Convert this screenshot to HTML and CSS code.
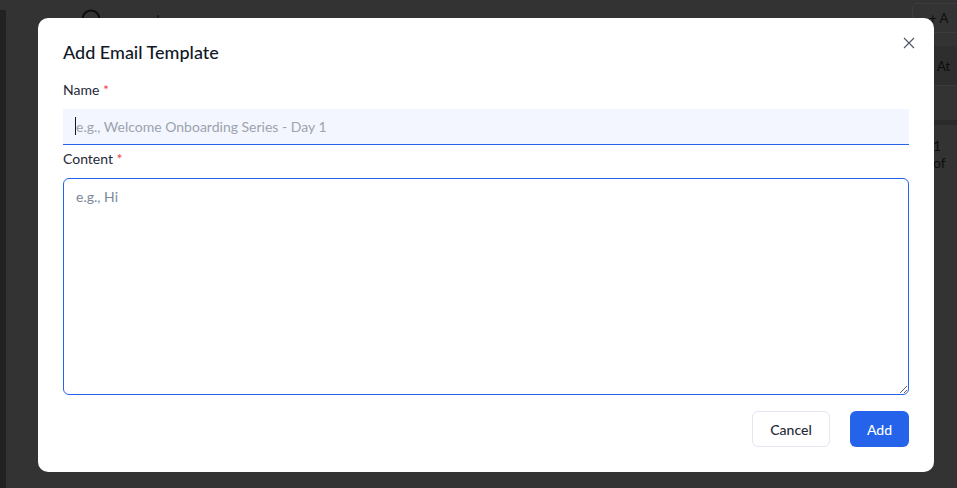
FILE: index.html
```html
<!DOCTYPE html>
<html lang="en">
<head>
<meta charset="utf-8">
<title>Add Email Template</title>
<link rel="stylesheet" href="styles.css">
</head>
<body>
<div class="backdrop-page">
  <div class="page-rail"></div>
  <div class="page-search">
    <svg class="page-search-icon" viewBox="0 0 24 24" width="24" height="24" aria-hidden="true"><circle cx="11" cy="11" r="8.5" fill="none" stroke="#0c0c0c" stroke-width="2"/></svg>
    <span>e.g., abc</span>
  </div>
  <div class="page-right">
    <div class="page-add"><span class="plus">+</span> A</div>
    <div class="page-head">At</div>
    <div class="page-size">5</div>
    <div class="page-band"></div>
    <div class="page-count">1 of</div>
  </div>
</div>
<div class="overlay">
  <form class="modal">
    <button type="button" class="close" aria-label="Close">
      <svg viewBox="0 0 12 12" width="12" height="12" aria-hidden="true"><path d="M1 1l10 10M11 1L1 11" stroke="#4b5563" stroke-width="1.1" fill="none"/></svg>
    </button>
    <h2 class="title">Add Email Template</h2>
    <label class="label name-label" for="tpl-name">Name <span class="req">*</span></label>
    <div class="name-input">
      <i class="caret"></i>
      <input id="tpl-name" type="text" placeholder="e.g., Welcome Onboarding Series - Day 1">
    </div>
    <label class="label content-label" for="tpl-content">Content <span class="req">*</span></label>
    <textarea id="tpl-content" class="content-input" placeholder="e.g., Hi"></textarea>
    <div class="actions">
      <button type="button" class="btn btn-cancel">Cancel</button>
      <button type="button" class="btn btn-add">Add</button>
    </div>
  </form>
</div>
</body>
</html>
```
FILE: styles.css
```css
* { box-sizing: border-box; }
html, body { margin: 0; height: 100%; }
body {
  width: 957px; height: 488px; overflow: hidden; position: relative;
  background: #333333;
  font-family: "Lato", "Noto Sans", sans-serif;
  color: #111827;
}
.backdrop-page { position: absolute; inset: 0; color: #0d0d0d; font-size: 13px; }
.page-rail { position: absolute; left: 0; top: 10px; bottom: 0; width: 6px; background: #222222; }
.page-search { position: absolute; left: 80px; top: 8px; display: flex; gap: 20px; align-items: center; }
.page-right { position: absolute; left: 912px; top: 0; width: 45px; }
.page-add { position: absolute; left: 0; top: 3px; width: 60px; height: 30px; border: 1px solid #3d3d3d; border-radius: 5px; padding: 6px 16px; }
.page-head { position: absolute; left: 0; top: 46px; width: 45px; height: 40px; background: #2e2e2e; padding: 12px 25px; border-bottom: 1px solid #3a3a3a; }
.page-size { position: absolute; left: -3px; top: 92px; width: 20px; height: 20px; border: 1px solid #3d3d3d; border-radius: 4px; padding: 1px 6px; }
.page-band { position: absolute; left: 0; top: 120px; width: 45px; height: 5px; background: #2a2a2a; }
.page-count { position: absolute; left: 21px; top: 137px; font-size: 14px; }

.overlay { position: absolute; inset: 0; }
.modal {
  position: absolute; left: 38px; top: 18px; width: 896px; height: 454px;
  background: #fff; border-radius: 10px; padding: 24px 25px 25px;
  display: flex; flex-direction: column;
}
.close { position: absolute; right: 19px; top: 19px; width: 12px; height: 12px; padding: 0; border: 0; background: none; display: flex; }
.title { margin: 0; font-size: 18px; line-height: 20px; font-weight: 500; color: #111827; }
.label { font-size: 14px; line-height: 20px; color: #1f2937; display: block; }
.name-label { margin-top: 18px; }
.req { color: #ef4444; }
.name-input {
  position: relative; margin-top: 9px; height: 36px;
  background: #f3f6fe; border-bottom: 1px solid #2563eb; display: flex;
}
.name-input input {
  flex: 1; border: 0; background: none; outline: 0; padding: 0 13px;
  font: inherit; font-size: 14px; color: #111827;
}
.name-input input::placeholder { color: #9ca3af; opacity: 1; }
.caret { position: absolute; left: 12px; top: 8px; width: 1px; height: 18px; background: #111827; }
.content-label { margin-top: 4px; }
.content-input {
  margin-top: 9px; height: 218px; width: 100%; border: 1px solid #2563eb; border-radius: 6px;
  padding: 9px 12px; font: inherit; font-size: 14px; outline: 0; background: #fff; display: block;
}
.content-input::placeholder { color: #7b8798; opacity: 1; }
.actions { margin-top: 16px; display: flex; justify-content: flex-end; gap: 20px; }
.btn { height: 36px; border-radius: 6px; font: inherit; font-size: 14px; font-weight: 500; padding: 0; }
.btn-cancel { width: 78px; background: #fff; border: 1px solid #e2e6f0; color: #1f2937; }
.btn-add { width: 59px; background: #2563eb; border: 0; color: #fff; }
```
